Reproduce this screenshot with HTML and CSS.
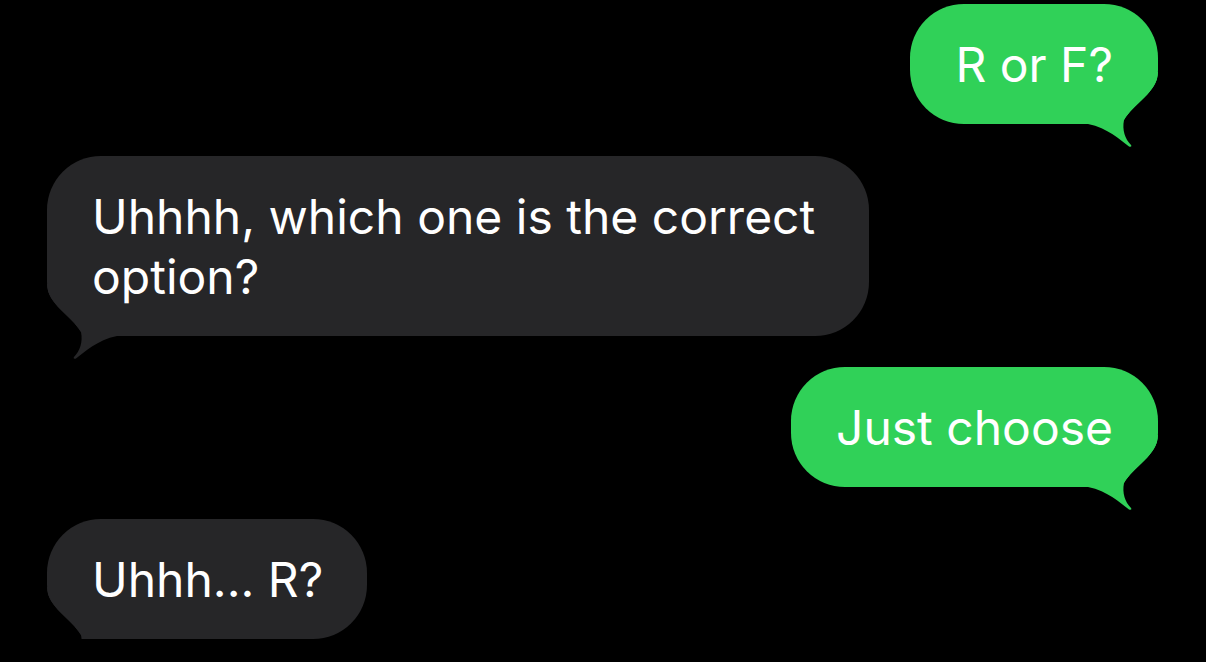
FILE: index.html
```html
<!DOCTYPE html>
<html lang="en">
<head>
  <meta charset="UTF-8">
  <title>Messages</title>
  <link rel="stylesheet" href="styles.css">
</head>
<body>
<div class="thread">
  <div class="bubble sent">R or F?
    <svg class="tail" viewBox="0 0 70 75"><path d="M70 0C70 20 45 32 36 48C35.5 50 35.3 51 35.2 52H70Z" fill="#000"/><path d="M0 0H70C70 20 45 32 36 48C34 58 37 67 43 73C44 74.5 43 75 41 74.5C32 68 20 56 0 52Z" fill="currentColor"/></svg>
  </div>
  <div class="bubble received">Uhhhh, which one is the correct option?
    <svg class="tail" viewBox="0 0 70 75"><path d="M70 0C70 20 45 32 36 48C35.5 50 35.3 51 35.2 52H70Z" fill="#000"/><path d="M0 0H70C70 20 45 32 36 48C34 58 37 67 43 73C44 74.5 43 75 41 74.5C32 68 20 56 0 52Z" fill="currentColor"/></svg>
  </div>
  <div class="bubble sent">Just choose
    <svg class="tail" viewBox="0 0 70 75"><path d="M70 0C70 20 45 32 36 48C35.5 50 35.3 51 35.2 52H70Z" fill="#000"/><path d="M0 0H70C70 20 45 32 36 48C34 58 37 67 43 73C44 74.5 43 75 41 74.5C32 68 20 56 0 52Z" fill="currentColor"/></svg>
  </div>
  <div class="bubble received">Uhhh... R?
    <svg class="tail" viewBox="0 0 70 75"><path d="M70 0C70 20 45 32 36 48C35.5 50 35.3 51 35.2 52H70Z" fill="#000"/><path d="M0 0H70C70 20 45 32 36 48C34 58 37 67 43 73C44 74.5 43 75 41 74.5C32 68 20 56 0 52Z" fill="currentColor"/></svg>
  </div>
</div>
</body>
</html>
```

FILE: styles.css
```css
body { margin: 0; background: #000; font-family: Inter, "Liberation Sans", sans-serif; }
.thread { display: flex; flex-direction: column; gap: 31.5px; padding: 4px 48px 0 47px; }
.bubble { position: relative; z-index: 0; box-sizing: border-box; max-width: 822px; padding: 31px 44px 29px 45px; border-radius: 54px; color: #fff; font-size: 48px; line-height: 60px; }
.sent { align-self: flex-end; background: #30d158; padding-right: 45px; }
.received { align-self: flex-start; background: #262628; }
.tail { position: absolute; z-index: -1; width: 70px; height: 75px; bottom: -23px; }
.sent .tail { right: 0; color: #30d158; }
.received .tail { left: 0; color: #262628; transform: scaleX(-1); }
```
